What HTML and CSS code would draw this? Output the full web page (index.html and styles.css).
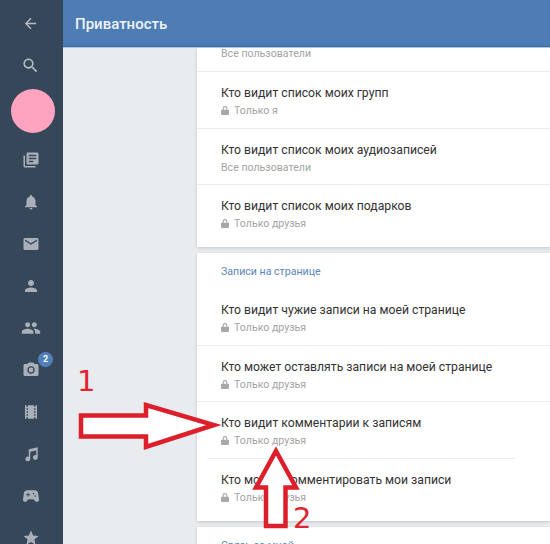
FILE: index.html
```html
<!DOCTYPE html>
<html lang="ru">
<head>
<meta charset="utf-8">
<title>Приватность</title>
<link rel="stylesheet" href="styles.css">
</head>
<body>
<div class="app">
  <nav class="rail">
    <div class="rail-item"><svg class="ico ico-back" viewBox="0 0 24 24"><path d="M20 11H7.83l5.59-5.59L12 4l-8 8 8 8 1.41-1.41L7.83 13H20v-2z"/></svg></div>
    <div class="rail-item"><svg class="ico ico-search" viewBox="0 0 24 24"><path d="M15.5 14h-.79l-.28-.27C15.41 12.59 16 11.11 16 9.5 16 5.91 13.09 3 9.5 3S3 5.91 3 9.5 5.91 16 9.5 16c1.61 0 3.09-.59 4.23-1.57l.27.28v.79l5 4.99L20.49 19l-4.99-5zm-6 0C7.01 14 5 11.99 5 9.5S7.01 5 9.5 5 14 7.01 14 9.5 11.99 14 9.5 14z"/></svg></div>
    <div class="avatar"></div>
    <div class="rail-item"><svg class="ico" viewBox="0 0 24 24"><path d="M4 6H2v14c0 1.1.9 2 2 2h14v-2H4V6zm16-4H8c-1.1 0-2 .9-2 2v12c0 1.1.9 2 2 2h12c1.1 0 2-.9 2-2V4c0-1.1-.9-2-2-2zm-1 9H9V9h10v2zm-4 4H9v-2h6v2zm4-8H9V5h10v2z"/></svg></div>
    <div class="rail-item"><svg class="ico" viewBox="0 0 24 24"><path d="M12 22c1.1 0 2-.9 2-2h-4c0 1.1.89 2 2 2zm6-6v-5c0-3.07-1.64-5.64-4.5-6.32V4c0-.83-.67-1.5-1.5-1.5s-1.5.67-1.5 1.5v.68C7.63 5.36 6 7.92 6 11v5l-2 2v1h16v-1l-2-2z"/></svg></div>
    <div class="rail-item"><svg class="ico" viewBox="0 0 24 24"><path d="M20 4H4c-1.1 0-1.99.9-1.99 2L2 18c0 1.1.9 2 2 2h16c1.1 0 2-.9 2-2V6c0-1.1-.9-2-2-2zm0 4l-8 5-8-5V6l8 5 8-5v2z"/></svg></div>
    <div class="rail-item"><svg class="ico" viewBox="0 0 24 24"><path d="M12 12c2.21 0 4-1.79 4-4s-1.79-4-4-4-4 1.79-4 4 1.79 4 4 4zm0 2c-2.67 0-8 1.34-8 4v2h16v-2c0-2.66-5.33-4-8-4z"/></svg></div>
    <div class="rail-item"><svg class="ico ico-wide" viewBox="0 0 24 24"><path d="M16 11c1.66 0 2.99-1.34 2.99-3S17.66 5 16 5c-1.66 0-3 1.34-3 3s1.34 3 3 3zm-8 0c1.66 0 2.99-1.34 2.99-3S9.66 5 8 5C6.34 5 5 6.34 5 8s1.34 3 3 3zm0 2c-2.33 0-7 1.17-7 3.5V19h14v-2.5c0-2.33-4.67-3.5-7-3.5zm8 0c-.29 0-.62.02-.97.05 1.16.84 1.97 1.97 1.97 3.45V19h6v-2.5c0-2.33-4.67-3.5-7-3.5z"/></svg></div>
    <div class="rail-item">
      <svg class="ico" viewBox="0 0 24 24"><circle cx="12" cy="12" r="3.2"/><path d="M9 2L7.17 4H4c-1.1 0-2 .9-2 2v12c0 1.1.9 2 2 2h16c1.1 0 2-.9 2-2V6c0-1.1-.9-2-2-2h-3.17L15 2H9zm3 15c-2.76 0-5-2.24-5-5s2.24-5 5-5 5 2.24 5 5-2.24 5-5 5z"/></svg>
      <span class="badge">2</span>
    </div>
    <div class="rail-item"><svg class="ico" viewBox="0 0 24 24"><path d="M18 3v2h-2V3H8v2H6V3H4v18h2v-2h2v2h8v-2h2v2h2V3h-2zM8 17H6v-2h2v2zm0-4H6v-2h2v2zm0-4H6V7h2v2zm10 8h-2v-2h2v2zm0-4h-2v-2h2v2zm0-4h-2V7h2v2z"/></svg></div>
    <div class="rail-item"><svg class="ico" viewBox="0 0 24 24"><path d="M9 5.500v10.100A3.200 3.200 0 1 0 11 18.500V9l8-1.600v6.200A3.200 3.200 0 1 0 21 16.500V3z"/></svg></div>
    <div class="rail-item"><svg class="ico ico-wide" viewBox="0 0 24 24"><path d="M21.58 16.090l-1.090-7.660C20.210 6.460 18.520 5 16.530 5H7.470C5.480 5 3.790 6.460 3.510 8.430l-1.090 7.660C2.200 17.630 3.390 19 4.940 19c.68 0 1.320-.27 1.800-.75L9 16h6l2.250 2.250c.48.48 1.130.75 1.800.75 1.560 0 2.750-1.370 2.530-2.910zM11 11H9v2H8v-2H6v-1h2V8h1v2h2v1zm4-1c-.55 0-1-.45-1-1s.45-1 1-1 1 .45 1 1-.45 1-1 1zm2 3c-.55 0-1-.45-1-1s.45-1 1-1 1 .45 1 1-.45 1-1 1z"/></svg></div>
    <div class="rail-item"><svg class="ico" viewBox="0 0 24 24"><path d="M12 17.270L18.180 21l-1.640-7.030L22 9.240l-7.190-.61L12 2 9.190 8.630 2 9.240l5.460 4.730L5.820 21z"/></svg></div>
  </nav>

  <div class="main">
    <header class="topbar"><h1 class="topbar-title">Приватность</h1></header>
    <div class="scroll">
      <section class="card">
        <div class="row row-cut"><div class="row-sub">Все пользователи</div></div>
        <div class="row">
          <div class="row-title">Кто видит список моих групп</div>
          <div class="row-sub"><svg class="lock" viewBox="0 0 10 11"><path d="M5 0a3 3 0 0 0-3 3v1.500H1a1 1 0 0 0-1 1V10a1 1 0 0 0 1 1h8a1 1 0 0 0 1-1V5.500a1 1 0 0 0-1-1H8V3a3 3 0 0 0-3-3zm0 1.400A1.600 1.600 0 0 1 6.600 3v1.500H3.400V3A1.600 1.600 0 0 1 5 1.400z"/></svg>Только я</div>
        </div>
        <div class="row">
          <div class="row-title">Кто видит список моих аудиозаписей</div>
          <div class="row-sub">Все пользователи</div>
        </div>
        <div class="row">
          <div class="row-title">Кто видит список моих подарков</div>
          <div class="row-sub"><svg class="lock" viewBox="0 0 10 11"><path d="M5 0a3 3 0 0 0-3 3v1.500H1a1 1 0 0 0-1 1V10a1 1 0 0 0 1 1h8a1 1 0 0 0 1-1V5.500a1 1 0 0 0-1-1H8V3a3 3 0 0 0-3-3zm0 1.400A1.600 1.600 0 0 1 6.600 3v1.500H3.400V3A1.600 1.600 0 0 1 5 1.400z"/></svg>Только друзья</div>
        </div>
      </section>

      <section class="card">
        <h2 class="card-head">Записи на странице</h2>
        <div class="row">
          <div class="row-title">Кто видит чужие записи на моей странице</div>
          <div class="row-sub"><svg class="lock" viewBox="0 0 10 11"><path d="M5 0a3 3 0 0 0-3 3v1.500H1a1 1 0 0 0-1 1V10a1 1 0 0 0 1 1h8a1 1 0 0 0 1-1V5.500a1 1 0 0 0-1-1H8V3a3 3 0 0 0-3-3zm0 1.400A1.600 1.600 0 0 1 6.600 3v1.500H3.400V3A1.600 1.600 0 0 1 5 1.400z"/></svg>Только друзья</div>
        </div>
        <div class="row">
          <div class="row-title">Кто может оставлять записи на моей странице</div>
          <div class="row-sub"><svg class="lock" viewBox="0 0 10 11"><path d="M5 0a3 3 0 0 0-3 3v1.500H1a1 1 0 0 0-1 1V10a1 1 0 0 0 1 1h8a1 1 0 0 0 1-1V5.500a1 1 0 0 0-1-1H8V3a3 3 0 0 0-3-3zm0 1.400A1.600 1.600 0 0 1 6.600 3v1.500H3.400V3A1.600 1.600 0 0 1 5 1.400z"/></svg>Только друзья</div>
        </div>
        <div class="row row-inset">
          <div class="row-title">Кто видит комментарии к записям</div>
          <div class="row-sub"><svg class="lock" viewBox="0 0 10 11"><path d="M5 0a3 3 0 0 0-3 3v1.500H1a1 1 0 0 0-1 1V10a1 1 0 0 0 1 1h8a1 1 0 0 0 1-1V5.500a1 1 0 0 0-1-1H8V3a3 3 0 0 0-3-3zm0 1.400A1.600 1.600 0 0 1 6.600 3v1.500H3.400V3A1.600 1.600 0 0 1 5 1.400z"/></svg>Только друзья</div>
        </div>
        <div class="row">
          <div class="row-title">Кто может комментировать мои записи</div>
          <div class="row-sub"><svg class="lock" viewBox="0 0 10 11"><path d="M5 0a3 3 0 0 0-3 3v1.500H1a1 1 0 0 0-1 1V10a1 1 0 0 0 1 1h8a1 1 0 0 0 1-1V5.500a1 1 0 0 0-1-1H8V3a3 3 0 0 0-3-3zm0 1.400A1.600 1.600 0 0 1 6.600 3v1.500H3.400V3A1.600 1.600 0 0 1 5 1.400z"/></svg>Только друзья</div>
        </div>
      </section>

      <section class="card">
        <h2 class="card-head">Связь со мной</h2>
      </section>
    </div>
  </div>
</div>

<svg class="marks" viewBox="0 0 550 544">
  <path class="mark" d="M81 415.500H146V405L214 425L146 447V436.500H81Z"/>
  <path class="mark" d="M276 451L296 487.500H285.500V526H266V487.500H256Z"/>
</svg>
<span class="num num-1">1</span>
<span class="num num-2">2</span>
</body>
</html>
```

FILE: styles.css
```css
* { box-sizing: border-box; }

html, body {
  margin: 0;
  height: 100%;
  overflow: hidden;
}

body {
  font-family: Roboto, "Noto Sans", sans-serif;
  background: #e9ecef;
  position: relative;
}

.app {
  display: flex;
  height: 544px;
  overflow: hidden;
}

.rail {
  width: 63px;
  flex: none;
  background: #37475a;
  display: flex;
  flex-direction: column;
  padding-top: 2px;
}

.rail-item {
  position: relative;
  flex: none;
  height: 42px;
  display: flex;
  align-items: center;
  justify-content: center;
  padding-right: 2px;
}

.ico {
  width: 18px;
  height: 18px;
  fill: #a9b0ba;
}

.ico-wide { width: 20px; height: 20px; }
.ico-back { width: 17px; height: 17px; fill: #b4bbc4; }
.ico-search { width: 19px; height: 19px; fill: #b4bbc4; }

.avatar {
  flex: none;
  width: 44px;
  height: 44px;
  margin: 3px 0 6px 11px;
  border-radius: 50%;
  background: #ffa4c0;
}

.badge {
  position: absolute;
  left: 38px;
  top: 3px;
  width: 15px;
  height: 15px;
  border-radius: 50%;
  background: #4f80ba;
  color: #fff;
  font-size: 9px;
  font-weight: 700;
  line-height: 15px;
  text-align: center;
}

.main {
  flex: 1;
  min-width: 0;
  display: flex;
  flex-direction: column;
}

.topbar {
  flex: none;
  height: 48px;
  background: #4e7db6;
  border-bottom: 1px solid #a5c6e8;
  box-shadow: inset 0 -3px 3px -2px #44688f;
  display: flex;
  align-items: center;
  padding-left: 12px;
}

.topbar-title {
  margin: 0;
  font-size: 15px;
  font-weight: 500;
  color: #eef4fb;
}

.scroll {
  flex: 1;
  min-height: 0;
  overflow: hidden;
  padding-left: 134px;
}

.card {
  background: #fff;
  margin-bottom: 6px;
  box-shadow: 0 1px 3px rgba(0, 0, 0, .16);
}

.row {
  height: 56.500px;
  padding: 13px 10px 0 24px;
  border-bottom: 1px solid #ebedf0;
}

.row:last-child {
  height: 62px;
  border-bottom: 0;
}

.row-inset {
  margin: 0 35px 0 10px;
  padding-left: 14px;
}

.row-cut {
  height: 24px;
  padding-top: 0;
  display: flow-root;
}

.row-cut .row-sub {
  margin-top: 0;
  line-height: 11px;
}

.row-title {
  font-size: 12.200px;
  line-height: 17px;
  color: #333;
  white-space: nowrap;
}

.row-sub {
  display: flex;
  align-items: center;
  margin-top: 1px;
  font-size: 10.600px;
  line-height: 15px;
  color: #a3a3a3;
  white-space: nowrap;
}

.lock {
  flex: none;
  width: 8px;
  height: 9px;
  margin-right: 5px;
  fill: #a8a8a8;
}

.card-head {
  margin: 0;
  padding: 12px 0 10px 24px;
  font-size: 10.600px;
  font-weight: 400;
  line-height: 14px;
  color: #5b85b5;
}

.marks {
  position: absolute;
  left: 0;
  top: 0;
  width: 550px;
  height: 544px;
  pointer-events: none;
}

.mark {
  fill: #fff;
  stroke: #dd1f2b;
  stroke-width: 4.500;
  stroke-linejoin: miter;
}

.num {
  position: absolute;
  font-family: "DejaVu Sans", sans-serif;
  font-size: 29px;
  line-height: 34px;
  color: #e0242f;
}

.num-1 { left: 77px; top: 364px; }
.num-2 { left: 293px; top: 501px; }
```
